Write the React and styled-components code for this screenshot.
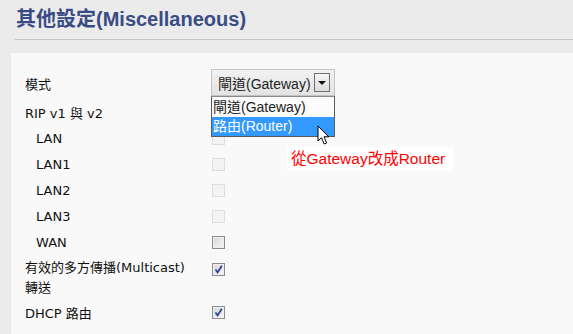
import React from "react";
import styled, { createGlobalStyle } from "styled-components";

const GlobalStyle = createGlobalStyle`
  html, body { margin: 0; padding: 0; background: #ebebeb; }
  * { box-sizing: border-box; }
`;

const Page = styled.div`
  width: 573px;
  height: 334px;
  overflow: hidden;
  background: #ebebeb;
  display: flex;
  flex-direction: column;
  font-family: "DejaVu Sans", "Noto Sans CJK TC", sans-serif;
  font-size: 13px;
  color: #111;
`;

const Header = styled.div`
  margin-left: 15px;
  height: 40px;
  border-bottom: 1px solid #c4c4c4;
  display: flex;
  align-items: flex-start;
`;

const Title = styled.h1`
  margin: 6px 0 0 1px;
  font-family: "Liberation Sans", "Noto Sans CJK TC", sans-serif;
  font-size: 20px;
  font-weight: bold;
  color: #3a4c84;
  line-height: 26px;
`;

const Panel = styled.div`
  flex: 1;
  margin: 13px 0 0 11px;
  background: #f9f9f9;
  padding: 16px 0 0 14px;
  position: relative;
`;

const Row = styled.div`
  display: flex;
  align-items: ${(p) => (p.$top ? "flex-start" : "center")};
  height: ${(p) => p.$h || 26}px;
`;

const Label = styled.div`
  width: 186px;
  padding-left: ${(p) => (p.$indent ? 11 : 0)}px;
  line-height: ${(p) => (p.$lh ? p.$lh + "px" : "normal")};
  padding-top: ${(p) => p.$pt || 0}px;
  white-space: nowrap;
`;

const SelectWrap = styled.div`
  position: relative;
  align-self: flex-start;
`;

const SelectBox = styled.div`
  width: 124px;
  height: 27px;
  border: 1px solid #c3c3c3;
  background: linear-gradient(#f2f2f2, #e3e3e3);
  display: flex;
  align-items: center;
  padding: 0 4px 0 6px;
  font-family: "Liberation Sans", "Noto Sans CJK TC", sans-serif;
  font-size: 14px;
  color: #222;
  justify-content: space-between;
`;

const ArrowBtn = styled.div`
  width: 16px;
  height: 19px;
  border: 1px solid #6f6f6f;
  background: linear-gradient(#f6f6f6, #dcdcdc);
  display: flex;
  align-items: center;
  justify-content: center;
  &::after {
    content: "";
    border-left: 4px solid transparent;
    border-right: 4px solid transparent;
    border-top: 4px solid #111;
  }
`;

const DropList = styled.div`
  position: absolute;
  top: 27px;
  left: 0;
  width: 124px;
  border: 1px solid #5a5a5a;
  border-top-color: #8a8a8a;
  background: #fbfbfb;
  font-family: "Liberation Sans", "Noto Sans CJK TC", sans-serif;
  font-size: 14px;
  z-index: 2;
`;

const Option = styled.div`
  height: ${(p) => p.$h}px;
  line-height: ${(p) => p.$h}px;
  padding-left: 1px;
  color: ${(p) => (p.$active ? "#fff" : "#222")};
  background: ${(p) => (p.$active ? "#3399ff" : "transparent")};
`;

const Check = styled.span`
  display: inline-flex;
  align-items: center;
  justify-content: center;
  width: 13px;
  height: 13px;
  margin-left: 1px;
  margin-top: ${(p) => p.$mt || 0}px;
  border: 1px solid ${(p) => (p.$disabled ? "#dedede" : "#8d8d8d")};
  background: ${(p) =>
    p.$disabled ? "#f3f3f3" : "linear-gradient(135deg, #d6d6d6, #f7f7f7)"};
  box-shadow: ${(p) => (p.$disabled ? "none" : "inset 0 0 0 1px #f0f0f0")};
`;

const Note = styled.div`
  position: absolute;
  left: 276px;
  top: 94px;
  width: 166px;
  height: 24px;
  background: #fff;
  color: #ff0000;
  font-family: "Liberation Sans", "Noto Sans CJK TC", sans-serif;
  font-size: 15.5px;
  line-height: 24px;
  padding-left: 4px;
  white-space: nowrap;
`;

const Cursor = styled.svg`
  position: absolute;
  left: 306px;
  top: 72px;
  z-index: 3;
`;

const CheckBox = ({ checked, disabled, mt }) => (
  <Check $disabled={disabled} $mt={mt}>
    {checked && (
      <svg width="11" height="11" viewBox="0 0 11 11">
        <path d="M2.5 5.5 L4.6 8.4 L8.8 1.8" fill="none" stroke="#2f4396" strokeWidth="1.8" />
      </svg>
    )}
  </Check>
);

export default function App() {
  return (
    <>
      <GlobalStyle />
      <Page>
        <Header>
          <Title>其他設定(Miscellaneous)</Title>
        </Header>
        <Panel>
          <Row $h={30} $top>
            <Label $pt={5}>模式</Label>
            <SelectWrap>
              <SelectBox>
                <span>閘道(Gateway)</span>
                <ArrowBtn />
              </SelectBox>
              <DropList>
                <Option $h={20}>閘道(Gateway)</Option>
                <Option $h={19} $active>路由(Router)</Option>
              </DropList>
            </SelectWrap>
          </Row>
          <Row>
            <Label>RIP v1 與 v2</Label>
          </Row>
          <Row>
            <Label $indent>LAN</Label>
            <CheckBox disabled />
          </Row>
          <Row>
            <Label $indent>LAN1</Label>
            <CheckBox disabled />
          </Row>
          <Row>
            <Label $indent>LAN2</Label>
            <CheckBox disabled />
          </Row>
          <Row>
            <Label $indent>LAN3</Label>
            <CheckBox disabled />
          </Row>
          <Row>
            <Label $indent>WAN</Label>
            <CheckBox />
          </Row>
          <Row $h={43} $top>
            <Label $lh={20} $pt={3}>
              有效的多方傳播(Multicast)
              <br />
              轉送
            </Label>
            <CheckBox checked mt={8} />
          </Row>
          <Row $h={28}>
            <Label>DHCP 路由</Label>
            <CheckBox checked />
          </Row>
          <Note>從Gateway改成Router</Note>
          <Cursor width="14" height="21" viewBox="0 0 14 21">
            <path
              d="M1 1 L1 16 L4.5 12.7 L7.2 19 L9.6 18 L7 11.8 L11.8 11.8 Z"
              fill="#fff"
              stroke="#000"
              strokeWidth="1"
              strokeLinejoin="round"
            />
          </Cursor>
        </Panel>
      </Page>
    </>
  );
}
